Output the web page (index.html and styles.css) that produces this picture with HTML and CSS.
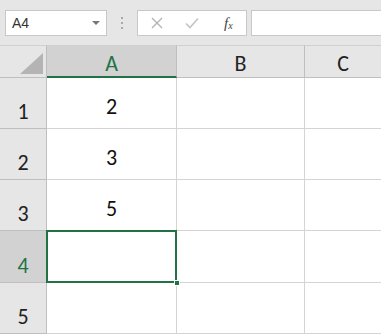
FILE: index.html
```html
<!DOCTYPE html>
<html>
<head>
<meta charset="utf-8">
<link rel="stylesheet" href="styles.css">
</head>
<body>
<div class="toolbar">
  <div class="namebox"><span class="nb-text">A4</span><span class="nb-caret"></span></div>
  <div class="sep"><span class="dot"></span><span class="dot"></span><span class="dot"></span></div>
  <div class="fxbtns">
    <svg class="ico-x" width="12" height="12" viewBox="0 0 12 12"><path d="M1 1L11 11M11 1L1 11" stroke="#b4b4b4" stroke-width="1.4" fill="none"/></svg>
    <svg class="ico-check" width="14" height="12" viewBox="0 0 14 12"><path d="M1 6.5L5 10.5L13 1.5" stroke="#c4c4c4" stroke-width="1.6" fill="none"/></svg>
    <span class="fx">f<sub>x</sub></span>
  </div>
  <div class="formula"></div>
</div>
<div class="sheet">
  <div class="corner"><span class="tri"></span></div>
  <div class="colhead sel">A</div>
  <div class="colhead">B</div>
  <div class="colhead last">C</div>

  <div class="rowhead">1</div>
  <div class="cell">2</div>
  <div class="cell"></div>
  <div class="cell last"></div>

  <div class="rowhead">2</div>
  <div class="cell">3</div>
  <div class="cell"></div>
  <div class="cell last"></div>

  <div class="rowhead">3</div>
  <div class="cell">5</div>
  <div class="cell"></div>
  <div class="cell last"></div>

  <div class="rowhead sel">4</div>
  <div class="cell active"><span class="handle"></span></div>
  <div class="cell"></div>
  <div class="cell last"></div>

  <div class="rowhead">5</div>
  <div class="cell"></div>
  <div class="cell"></div>
  <div class="cell last"></div>
</div>
</body>
</html>
```

FILE: styles.css
```css
* { box-sizing: border-box; }
html, body { margin: 0; padding: 0; }
body {
  width: 381px;
  height: 334px;
  overflow: hidden;
  background: #e6e6e6;
  font-family: Carlito, Lato, "Open Sans", sans-serif;
}
.toolbar {
  height: 45px;
  display: flex;
  align-items: flex-start;
  padding: 10px 0 0 5px;
  background: #e6e6e6;
}
.namebox {
  width: 102px;
  height: 26px;
  background: #fff;
  border: 1px solid #c8c8c8;
  display: flex;
  align-items: center;
  justify-content: space-between;
  padding: 0 6px 0 6px;
}
.nb-text {
  font-family: "Liberation Sans", Arial, sans-serif;
  font-size: 14px;
  color: #333;
}
.nb-caret {
  width: 0; height: 0;
  border-left: 4px solid transparent;
  border-right: 4px solid transparent;
  border-top: 4px solid #777;
}
.sep {
  width: 30px;
  height: 26px;
  display: flex;
  flex-direction: column;
  align-items: center;
  justify-content: center;
  gap: 3px;
}
.dot { width: 2px; height: 2px; background: #a8a8a8; }
.fxbtns {
  width: 110px;
  height: 26px;
  background: #fff;
  border: 1px solid #c8c8c8;
  display: flex;
  align-items: center;
  padding-left: 13px;
}
.ico-x { margin-right: 22px; }
.ico-check { margin-right: 25px; }
.fx {
  font-family: "Liberation Serif", "DejaVu Serif", serif;
  font-style: italic;
  font-size: 15px;
  color: #444;
  line-height: 1;
}
.fx sub { font-size: 10px; vertical-align: -1px; }
.formula {
  flex: 1;
  margin-left: 4px;
  height: 26px;
  background: #fff;
  border: 1px solid #c8c8c8;
  border-right: none;
}
.sheet {
  display: grid;
  grid-template-columns: 47px 130px 128px 76px;
  grid-template-rows: 33px 51px 51px 51px 52px 51px;
  background: #fff;
}
.corner {
  background: #e6e6e6;
  border-top: 1px solid #d0d0d0;
  border-right: 1px solid #bfbfbf;
  border-bottom: 1px solid #bfbfbf;
  position: relative;
}
.tri {
  position: absolute;
  right: 3px;
  bottom: 3px;
  width: 0; height: 0;
  border-left: 23px solid transparent;
  border-bottom: 21px solid #b4b4b4;
}
.colhead {
  background: #e6e6e6;
  border-top: 1px solid #d0d0d0;
  border-right: 1px solid #bfbfbf;
  border-bottom: 1px solid #bfbfbf;
  display: flex;
  align-items: center;
  justify-content: center;
  padding-top: 4px;
  font-size: 22px;
  color: #222;
}
.colhead.last { border-right: none; }
.colhead.sel {
  background: #d2d2d2;
  color: #217346;
  border-bottom: 2px solid #217346;
}
.rowhead {
  background: #e6e6e6;
  border-right: 1px solid #bfbfbf;
  border-bottom: 1px solid #bfbfbf;
  display: flex;
  align-items: flex-end;
  justify-content: center;
  padding-bottom: 4px;
  font-size: 22px;
  line-height: 24px;
  color: #222;
}
.rowhead.sel {
  background: #d2d2d2;
  color: #217346;
}
.cell {
  border-right: 1px solid #d4d4d4;
  border-bottom: 1px solid #d4d4d4;
  display: flex;
  align-items: center;
  justify-content: center;
  padding-top: 6px;
  font-size: 22px;
  color: #111;
  position: relative;
}
.cell.last { border-right: none; }
.cell.active::after {
  content: "";
  position: absolute;
  left: -1px;
  top: -1px;
  right: -1px;
  bottom: -1px;
  border: 2px solid #217346;
}
.handle {
  position: absolute;
  right: -4px;
  bottom: -4px;
  width: 6px;
  height: 6px;
  background: #217346;
  border: 1px solid #fff;
  z-index: 2;
}
```
